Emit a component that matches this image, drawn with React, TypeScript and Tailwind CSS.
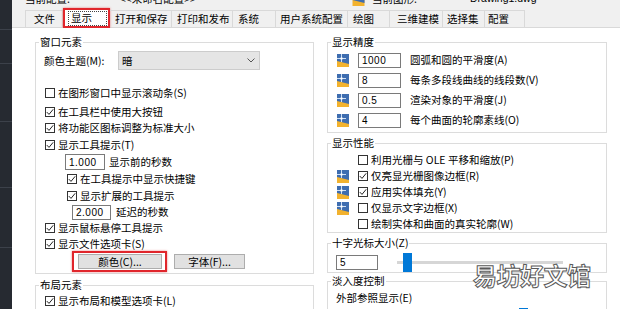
import type { ReactNode } from "react";

const tabs = [
  { label: "文件", w: "w-[38px]", pl: "pl-[8px]" },
  { label: "显示", w: "w-[47px]", pl: "pl-[7px]", active: true },
  { label: "打开和保存", w: "w-[62px]", pl: "pl-[5px]" },
  { label: "打印和发布", w: "w-[61px]", pl: "pl-[5px]" },
  { label: "系统", w: "w-[43px]", pl: "pl-[5px]" },
  { label: "用户系统配置", w: "w-[72px]", pl: "pl-[4px]" },
  { label: "绘图", w: "w-[42px]", pl: "pl-[5px]" },
  { label: "三维建模", w: "w-[53px]", pl: "pl-[7px]" },
  { label: "选择集", w: "w-[42px]", pl: "pl-[4px]" },
  { label: "配置", w: "w-[40px]", pl: "pl-[3px]" },
];

function Box({ checked }: { checked?: boolean }) {
  return (
    <span className="w-[10px] h-[10px] border border-[#333333] bg-white flex items-center justify-center shrink-0">
      {checked && (
        <svg width="8" height="8" viewBox="0 0 8 8">
          <path d="M0.8 4.1 L3 6.4 L7.2 1.3" stroke="#222" strokeWidth="1" fill="none" />
        </svg>
      )}
    </span>
  );
}

function Check({ checked, children, className = "" }: { checked?: boolean; children: ReactNode; className?: string }) {
  return (
    <div className={`flex items-center h-[16px] gap-[3px] ${className}`}>
      <Box checked={checked} />
      <span className="whitespace-nowrap">{children}</span>
    </div>
  );
}

// drawing-saved marker next to some settings
function DwgIcon() {
  return (
    <svg width="12" height="13" viewBox="0 0 12 13" className="shrink-0">
      <rect width="12" height="13" fill="#f2b22e" />
      <polygon points="0,0 12,0 12,10 0,7" fill="#3e6db0" />
      <line x1="0" y1="4.5" x2="9" y2="4.5" stroke="#cfe0f5" strokeWidth="1" />
      <line x1="4.5" y1="0" x2="4.5" y2="8" stroke="#cfe0f5" strokeWidth="1" />
      <rect x="3.5" y="3.5" width="2" height="2" fill="#ffffff" />
    </svg>
  );
}

function NumBox({ value, className }: { value: string; className: string }) {
  return (
    <div className={`border border-[#7a7a7a] bg-white flex items-center pl-[3px] text-[10px] font-['Liberation_Sans',sans-serif] tracking-[0.5px] shrink-0 ${className}`}>
      {value}
    </div>
  );
}

function Group({ title, children, className = "" }: { title: string; children: ReactNode; className?: string }) {
  return (
    <fieldset className={`border border-[#dcdcdc] ${className}`}>
      <legend className="ml-[3px] px-[1px] leading-[14px] whitespace-nowrap">{title}</legend>
      {children}
    </fieldset>
  );
}

function Slider({ thumb }: { thumb: string }) {
  return (
    <div className="relative w-[166px] h-[3px] bg-[#d6d6d6] ml-[19px]">
      <div className={`absolute top-[-8px] w-[9px] h-[19px] bg-[#0078d7] ${thumb}`} />
    </div>
  );
}

export default function App() {
  return (
    <div className="relative w-[620px] h-[309px] overflow-hidden flex bg-[#f0f0f0] text-[10.5px] text-black font-['Noto_Sans_CJK_SC','Noto_Sans',sans-serif]">
      <div className="w-[12px] shrink-0 bg-[#262a31] flex flex-col">
        <div className="h-[30px] border-b border-[#3c414a]" />
        <div className="h-[34px] border-b border-[#3c414a]" />
        <div className="h-[58px] border-b border-[#3c414a]" />
        <div className="h-[66px] border-b border-[#3c414a]" />
        <div className="h-[60px] border-b border-[#3c414a]" />
      </div>

      <div className="flex-1 flex flex-col min-w-0">
        <div className="h-[8px] overflow-hidden shrink-0">
          <div className="flex items-center -mt-[8px] h-[14px] whitespace-nowrap">
            <span className="ml-[13px] w-[95px]">当前配置:</span>
            <span className="w-[220px]">&lt;&lt;未命名配置&gt;&gt;</span>
            <svg width="13" height="13" viewBox="0 0 12 13" className="ml-[12px]">
              <rect width="12" height="13" fill="#f2b22e" />
              <polygon points="0,0 12,0 12,10 0,7" fill="#3e6db0" />
            </svg>
            <span className="ml-[7px] w-[98px]">当前图形:</span>
            <span className="font-['Liberation_Sans',sans-serif]">Drawing1.dwg</span>
          </div>
        </div>

        <div className="h-[20px] shrink-0 flex items-end pl-[13px] border-b border-[#d9d9d9]">
          {tabs.map((t) =>
            t.active ? (
              <div
                key={t.label}
                className={`${t.w} h-[20px] -mb-px bg-white border-2 border-[#e0262c] shadow-[0_0_2px_rgba(224,38,44,0.6)] flex items-center pl-[3px] whitespace-nowrap`}
              >
                <span className="border border-dotted border-[#444] h-[15px] w-[39px] flex items-center pl-[2px]">{t.label}</span>
              </div>
            ) : (
              <div
                key={t.label}
                className={`${t.w} ${t.pl} h-[17px] border-t border-r border-[#d9d9d9] first:border-l flex items-center whitespace-nowrap`}
              >
                {t.label}
              </div>
            )
          )}
        </div>

        <div className="flex-1 bg-white flex gap-[13px] pl-[23px] pt-[7px]">
          {/* left column */}
          <div className="w-[279px] shrink-0 flex flex-col">
            <Group title="窗口元素" className="pb-[1px]">
              <div className="pl-[8px] flex flex-col">
                <div className="flex items-center h-[19px] mt-[2px]">
                  <span className="w-[74px] whitespace-nowrap">颜色主题(M):</span>
                  <div className="w-[142px] h-[19px] bg-[#e5e5e5] border border-[#cccccc] flex items-center justify-between pl-[3px] pr-[4px]">
                    <span>暗</span>
                    <svg width="8" height="5" viewBox="0 0 8 5">
                      <path d="M0.5 0.5 L4 4 L7.5 0.5" stroke="#555" strokeWidth="1" fill="none" />
                    </svg>
                  </div>
                </div>
                <Check className="mt-[15px] ml-[1px]">在图形窗口中显示滚动条(S)</Check>
                <Check checked className="mt-[3px] ml-[1px]">在工具栏中使用大按钮</Check>
                <Check checked className="ml-[1px]">将功能区图标调整为标准大小</Check>
                <Check checked className="mt-[1px] ml-[1px]">显示工具提示(T)</Check>
                <div className="flex items-center h-[16px] mt-[1px] ml-[21px] gap-[4px]">
                  <NumBox value="1.000" className="w-[40px] h-[16px]" />
                  <span>显示前的秒数</span>
                </div>
                <Check checked className="mt-[1px] ml-[23px]">在工具提示中显示快捷键</Check>
                <Check checked className="mt-[1px] ml-[23px]">显示扩展的工具提示</Check>
                <div className="flex items-center h-[16px] ml-[28px] gap-[5px]">
                  <NumBox value="2.000" className="w-[39px] h-[15px]" />
                  <span>延迟的秒数</span>
                </div>
                <Check checked className="ml-[1px]">显示鼠标悬停工具提示</Check>
                <Check checked className="ml-[1px]">显示文件选项卡(S)</Check>
                <div className="flex items-center -mt-px ml-[28px]">
                  <div className="border-2 border-[#e0262c] shadow-[0_0_2px_rgba(224,38,44,0.6)] pl-[4px] pr-[3px] py-[1px]">
                    <div className="w-[84px] h-[15px] bg-[#e1e1e1] border border-[#adadad] flex items-center justify-center">
                      颜色(C)...
                    </div>
                  </div>
                  <div className="ml-[7px] w-[71px] h-[15px] bg-[#e1e1e1] border border-[#adadad] flex items-center justify-center">
                    字体(F)...
                  </div>
                </div>
              </div>
            </Group>
            <Group title="布局元素" className="mt-[4px]">
              <div className="pl-[9px]">
                <Check checked className="mt-[1px]">显示布局和模型选项卡(L)</Check>
              </div>
            </Group>
          </div>

          {/* right column */}
          <div className="w-[280px] shrink-0 flex flex-col">
            <Group title="显示精度" className="pb-[2px]">
              <div className="pl-[9px] mt-[1px] flex flex-col">
                {[
                  ["1000", "圆弧和圆的平滑度(A)"],
                  ["8", "每条多段线曲线的线段数(V)"],
                  ["0.5", "渲染对象的平滑度(J)"],
                  ["4", "每个曲面的轮廓素线(O)"],
                ].map(([v, l]) => (
                  <div key={l} className="flex items-center h-[20px]">
                    <DwgIcon />
                    <NumBox value={v} className="ml-[9px] w-[43px] h-[15px]" />
                    <span className="ml-[9px] whitespace-nowrap">{l}</span>
                  </div>
                ))}
              </div>
            </Group>

            <Group title="显示性能" className="mt-[3px]">
              <div className="pl-[9px] mt-[2px] flex flex-col">
                {[
                  [false, false, "利用光栅与 OLE 平移和缩放(P)"],
                  [true, true, "仅亮显光栅图像边框(R)"],
                  [true, true, "应用实体填充(Y)"],
                  [true, false, "仅显示文字边框(X)"],
                  [false, false, "绘制实体和曲面的真实轮廓(W)"],
                ].map(([icon, checked, l]) => (
                  <div key={l as string} className="flex items-center h-[16px]">
                    <div className="w-[12px] shrink-0">{icon && <DwgIcon />}</div>
                    <Check checked={checked as boolean} className="ml-[9px]">
                      {l as string}
                    </Check>
                  </div>
                ))}
              </div>
            </Group>

            <Group title="十字光标大小(Z)" className="mt-[3px]">
              <div className="pl-[8px] mt-[2px] flex items-center h-[20px]">
                <NumBox value="5" className="w-[42px] h-[15px]" />
                <Slider thumb="left-[6px]" />
              </div>
            </Group>

            <Group title="淡入度控制" className="mt-[1px] h-[60px]">
              <div className="pl-[8px] flex flex-col">
                <div className="h-[16px] mt-[2px] flex items-center">外部参照显示(E)</div>
                <div className="mt-[1px] flex items-center h-[20px]">
                  <NumBox value="" className="w-[42px] h-[15px]" />
                  <Slider thumb="left-[122px]" />
                </div>
              </div>
            </Group>
          </div>
        </div>
      </div>

      <div className="absolute left-[473px] top-[260px] text-[24px] leading-[30px] text-white font-bold tracking-[-0.5px] [-webkit-text-stroke:1px_#5a5a5a] whitespace-nowrap">
        易坊好文馆
      </div>
    </div>
  );
}
